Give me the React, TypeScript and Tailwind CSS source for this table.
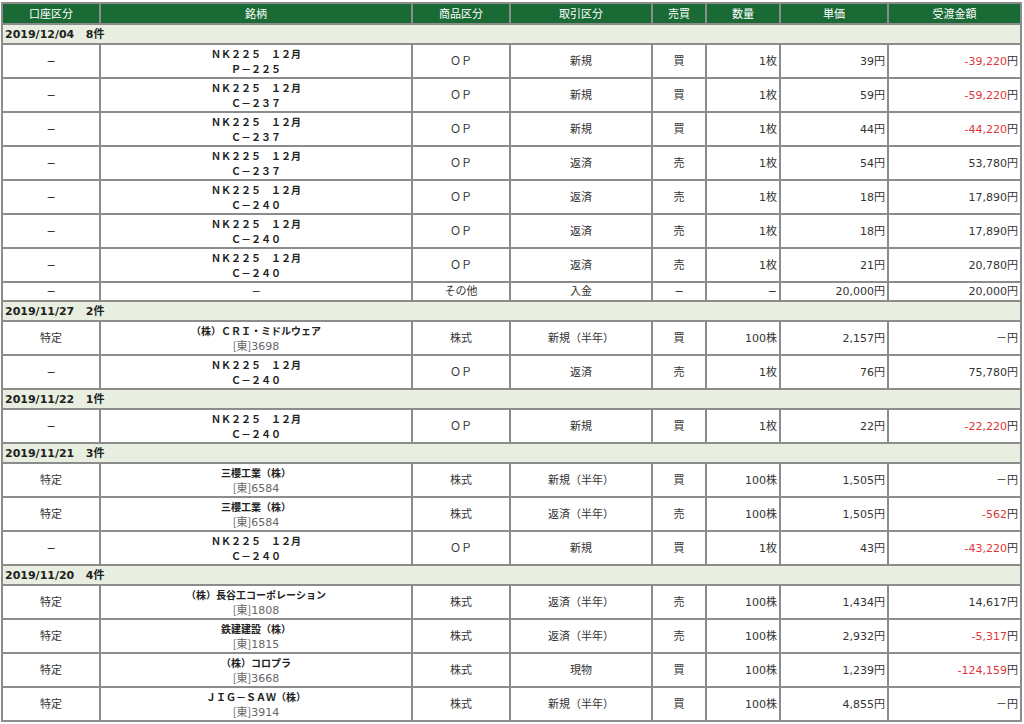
import React from "react";

type Row = {
  acct: string;
  name1: string;
  name2?: string;
  code?: string;
  kind: string;
  trade: string;
  side: string;
  qty: string;
  price: string;
  amount: string;
  red?: boolean;
  single?: boolean;
};

type Group = { date: string; count: string; rows: Row[] };

const NK = "ＮＫ２２５　１２月";

const op = (
  name2: string,
  trade: string,
  side: string,
  price: string,
  amount: string,
  red = false
): Row => ({
  acct: "−",
  name1: NK,
  name2,
  kind: "ＯＰ",
  trade,
  side,
  qty: "1枚",
  price,
  amount,
  red,
});

const stock = (
  name1: string,
  code: string,
  trade: string,
  side: string,
  price: string,
  amount: string,
  red = false
): Row => ({
  acct: "特定",
  name1,
  code,
  kind: "株式",
  trade,
  side,
  qty: "100株",
  price,
  amount,
  red,
});

const groups: Group[] = [
  {
    date: "2019/12/04",
    count: "8件",
    rows: [
      op("Ｐ－２２５", "新規", "買", "39円", "-39,220", true),
      op("Ｃ－２３７", "新規", "買", "59円", "-59,220", true),
      op("Ｃ－２３７", "新規", "買", "44円", "-44,220", true),
      op("Ｃ－２３７", "返済", "売", "54円", "53,780"),
      op("Ｃ－２４０", "返済", "売", "18円", "17,890"),
      op("Ｃ－２４０", "返済", "売", "18円", "17,890"),
      op("Ｃ－２４０", "返済", "売", "21円", "20,780"),
      {
        acct: "−",
        name1: "−",
        kind: "その他",
        trade: "入金",
        side: "−",
        qty: "−",
        price: "20,000円",
        amount: "20,000",
        single: true,
      },
    ],
  },
  {
    date: "2019/11/27",
    count: "2件",
    rows: [
      stock("（株）ＣＲＩ・ミドルウェア", "3698", "新規（半年）", "買", "2,157円", "－"),
      op("Ｃ－２４０", "返済", "売", "76円", "75,780"),
    ],
  },
  {
    date: "2019/11/22",
    count: "1件",
    rows: [op("Ｃ－２４０", "新規", "買", "22円", "-22,220", true)],
  },
  {
    date: "2019/11/21",
    count: "3件",
    rows: [
      stock("三櫻工業（株）", "6584", "新規（半年）", "買", "1,505円", "－"),
      stock("三櫻工業（株）", "6584", "返済（半年）", "売", "1,505円", "-562", true),
      op("Ｃ－２４０", "新規", "買", "43円", "-43,220", true),
    ],
  },
  {
    date: "2019/11/20",
    count: "4件",
    rows: [
      stock("（株）長谷工コーポレーション", "1808", "返済（半年）", "売", "1,434円", "14,617"),
      stock("鉄建建設（株）", "1815", "返済（半年）", "売", "2,932円", "-5,317", true),
      stock("（株）コロプラ", "3668", "現物", "買", "1,239円", "-124,159", true),
      stock("ＪＩＧ－ＳＡＷ（株）", "3914", "新規（半年）", "買", "4,855円", "－"),
    ],
  },
];

const headers = ["口座区分", "銘柄", "商品区分", "取引区分", "売買", "数量", "単価", "受渡金額"];
const widths = [98, 312, 98, 142, 54, 74, 108, 133];

const td = "border border-[#8c8c8c] px-[2px] py-0 align-middle leading-[13px]";

export default function App() {
  return (
    <div
      className="bg-white w-[1024px] h-[724px] overflow-hidden pt-[2px] pl-[1px] text-[#333] text-[11px]"
      style={{ fontFamily: '"DejaVu Sans", Verdana, "Noto Sans CJK JP", sans-serif' }}
    >
      <table className="table-fixed border-separate border-spacing-0 border border-[#8c8c8c] w-[1021px]">
        <colgroup>
          {widths.map((w, i) => (
            <col key={i} style={{ width: w }} />
          ))}
        </colgroup>
        <thead>
          <tr className="h-[21px]">
            {headers.map((h) => (
              <th
                key={h}
                className="border border-[#8c8c8c] bg-[#196a34] text-white font-normal text-center text-[11px] leading-[13px]"
                style={{ fontFamily: '"Noto Sans CJK JP", sans-serif' }}
              >
                {h}
              </th>
            ))}
          </tr>
        </thead>
        <tbody>
          {groups.map((g) => (
            <React.Fragment key={g.date}>
              <tr className="h-[20px]">
                <td colSpan={8} className={`${td} bg-[#e9efe0] font-bold text-[#222] pl-[2px]`}>
                  {g.date}&nbsp;&nbsp;&nbsp;{g.count}
                </td>
              </tr>
              {g.rows.map((r, i) => (
                <tr key={i} className={r.single ? "h-[19px]" : "h-[34px]"}>
                  <td className={`${td} text-center`}>{r.acct}</td>
                  <td className={`${td} text-center`}>
                    {r.single ? (
                      <span>{r.name1}</span>
                    ) : (
                      <>
                        <div
                          className="font-bold text-[#222] text-[10px] leading-[15px]"
                          style={{ fontFamily: '"Noto Sans CJK JP", sans-serif' }}
                        >
                          {r.name1}
                        </div>
                        {r.name2 && (
                          <div
                            className="font-bold text-[#222] text-[10px] leading-[15px]"
                            style={{ fontFamily: '"Noto Sans CJK JP", sans-serif' }}
                          >
                            {r.name2}
                          </div>
                        )}
                        {r.code && (
                          <div className="text-[#666] leading-[15px]">
                            <span style={{ fontFamily: '"Noto Sans CJK JP", sans-serif' }}>[東]</span>
                            {r.code}
                          </div>
                        )}
                      </>
                    )}
                  </td>
                  <td className={`${td} text-center`}>{r.kind}</td>
                  <td className={`${td} text-center`}>{r.trade}</td>
                  <td className={`${td} text-center`}>{r.side}</td>
                  <td className={`${td} text-right`}>{r.qty}</td>
                  <td className={`${td} text-right`}>{r.price}</td>
                  <td className={`${td} text-right`}>
                    <span className={r.red ? "text-[#e0353a]" : ""}>{r.amount}</span>円
                  </td>
                </tr>
              ))}
            </React.Fragment>
          ))}
        </tbody>
      </table>
    </div>
  );
}
